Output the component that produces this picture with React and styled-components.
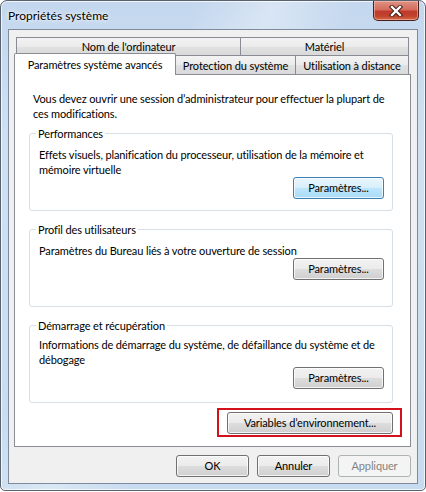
import React from 'react';
import styled, { createGlobalStyle, css } from 'styled-components';

const Global = createGlobalStyle`
  html, body { margin: 0; padding: 0; background: #ffffff; }
  body {
    width: 426px; height: 492px; overflow: hidden;
    font-family: "Segoe UI", Lato, "Noto Sans", sans-serif;
    font-size: 11px; letter-spacing: -0.12px; color: #000;
  }
  * { box-sizing: border-box; }
`;

const Window = styled.div`
  width: 426px;
  height: 491px;
  border: 1px solid #59636f;
  border-radius: 7px 7px 5px 5px;
  background:
    linear-gradient(115deg, rgba(255,255,255,0) 30%, rgba(255,255,255,0.35) 42%, rgba(255,255,255,0) 55%),
    linear-gradient(to bottom, #c3d7ee 0%, #cfe0f3 30%, #c7dbf0 100%);
  box-shadow: inset 0 0 0 1px rgba(255,255,255,0.75);
  display: flex;
  flex-direction: column;
  padding: 0 7px 6px 7px;
`;

const TitleBar = styled.div`
  height: 28px;
  display: flex;
  align-items: flex-start;
  justify-content: space-between;
`;

const Title = styled.div`
  padding-top: 7px;
  line-height: 15px;
  font-size: 12px;
  letter-spacing: 0;
  color: #000;
  text-shadow: 0 0 6px rgba(255,255,255,0.9), 0 0 3px rgba(255,255,255,0.9);
`;

const CloseButton = styled.div`
  width: 46px;
  height: 20px;
  margin-right: -1px;
  border: 1px solid #4a1f1c;
  border-top: none;
  border-radius: 0 0 5px 5px;
  background: linear-gradient(to bottom, #de9284 0%, #d46d5d 45%, #bf3a2b 55%, #c2432d 80%, #d46b4b 100%);
  box-shadow: inset 0 0 0 1px rgba(255,220,210,0.45);
  display: flex;
  align-items: center;
  justify-content: center;
`;

const Client = styled.div`
  flex: 1;
  border: 1px solid #7d8b9c;
  background: #f0f0f0;
  display: flex;
  flex-direction: column;
  padding: 7px 6px 6px 5px;
`;

const TabRow = styled.div`
  display: flex;
  align-items: flex-end;
  height: ${p => p.$h}px;
  padding: 0 2px 0 ${p => p.$inset}px;
`;

const Tab = styled.div`
  width: ${p => p.$w}px;
  height: ${p => p.$h}px;
  margin-left: ${p => (p.$first ? 0 : -1)}px;
  border: 1px solid #898c95;
  border-bottom: none;
  display: flex;
  align-items: center;
  justify-content: center;
  line-height: 15px;
  white-space: nowrap;
  ${p => p.$active
    ? css`
      position: relative;
      z-index: 2;
      background: #ffffff;
      margin-bottom: -1px;
      padding-bottom: 1px;
      border-radius: 2px 2px 0 0;
    `
    : css`
      background: linear-gradient(to bottom, #f3f3f3 0%, #ebebeb 50%, #e1e1e1 51%, #d9d9d9 100%);
    `}
`;

const Panel = styled.div`
  flex: 1;
  border: 1px solid #898c95;
  background: #ffffff;
  display: flex;
  flex-direction: column;
  padding: 16px 17px 0 14px;
`;

const Intro = styled.p`
  margin: 0 0 5px 4px;
  line-height: 15px;
  white-space: nowrap;
`;

const Group = styled.fieldset`
  margin: 0 0 ${p => p.$mb}px 0;
  height: 85px;
  border: 1px solid #d5dfe5;
  border-radius: 3px;
  padding: 0 8px 8px 9px;
  display: flex;
  flex-direction: column;
  min-width: 0;
`;

const Legend = styled.legend`
  padding: 0 2px;
  margin-left: -3px;
  line-height: 15px;
`;

const GroupText = styled.div`
  line-height: 15px;
  padding-top: ${p => p.$pt}px;
  white-space: nowrap;
`;

const RightRow = styled.div`
  display: flex;
  justify-content: flex-end;
  margin-top: ${p => p.$auto ? 'auto' : `${p.$mt}px`};
`;

const Highlight = styled.div`
  position: relative;
  &::after {
    content: "";
    position: absolute;
    left: -10px;
    right: -9px;
    top: -4px;
    bottom: -3px;
    border: 2px solid #d2111c;
    pointer-events: none;
  }
`;

const Button = styled.div`
  width: ${p => p.$w}px;
  height: ${p => p.$h || 22}px;
  border-radius: 3px;
  display: flex;
  align-items: center;
  justify-content: center;
  line-height: 15px;
  white-space: nowrap;
  padding-bottom: 1px;
  ${p => p.$variant === 'focus' && css`
    border: 1px solid #3c7fb1;
    background: linear-gradient(to bottom, #e9f6fd 0%, #d6effc 50%, #bde6fd 51%, #a9dbf6 100%);
    box-shadow: inset 0 0 0 1px rgba(255,255,255,0.75);
  `}
  ${p => p.$variant === 'normal' && css`
    border: 1px solid #707070;
    background: linear-gradient(to bottom, #f2f2f2 0%, #ebebeb 50%, #dddddd 51%, #cfcfcf 100%);
    box-shadow: inset 0 0 0 1px rgba(255,255,255,0.75);
  `}
  ${p => p.$variant === 'disabled' && css`
    border: 1px solid #adb2b5;
    background: #f4f4f4;
    color: #838383;
  `}
`;

const ButtonBar = styled.div`
  display: flex;
  justify-content: flex-end;
  gap: 8px;
  margin-top: 8px;
`;

const CloseGlyph = () => (
  <svg width="14" height="12" viewBox="0 0 14 12">
    <path d="M3 2 L11 10 M11 2 L3 10" stroke="#3a1512" strokeWidth="4.2" strokeLinecap="square" />
    <path d="M3 2 L11 10 M11 2 L3 10" stroke="#ffffff" strokeWidth="2.4" strokeLinecap="square" />
  </svg>
);

export default function App() {
  return (
    <>
      <Global />
      <Window>
        <TitleBar>
          <Title>Propriétés système</Title>
          <CloseButton><CloseGlyph /></CloseButton>
        </TitleBar>
        <Client>
          <TabRow $h={18} $inset={2}>
            <Tab $first $w={225} $h={18}>Nom de l'ordinateur</Tab>
            <Tab $w={169} $h={18}>Matériel</Tab>
          </TabRow>
          <TabRow $h={19} $inset={0}>
            <Tab $first $active $w={162} $h={22}>Paramètres système avancés</Tab>
            <Tab $w={121} $h={19}>Protection du système</Tab>
            <Tab $w={114} $h={19}>Utilisation à distance</Tab>
          </TabRow>
          <Panel>
            <Intro>
              Vous devez ouvrir une session d’administrateur pour effectuer la plupart de
              <br />
              ces modifications.
            </Intro>
            <Group $mb={11}>
              <Legend>Performances</Legend>
              <GroupText $pt={6}>
                Effets visuels, planification du processeur, utilisation de la mémoire et
                <br />
                mémoire virtuelle
              </GroupText>
              <RightRow $auto>
                <Button $variant="focus" $w={91}>Paramètres...</Button>
              </RightRow>
            </Group>
            <Group $mb={11}>
              <Legend>Profil des utilisateurs</Legend>
              <GroupText $pt={6}>Paramètres du Bureau liés à votre ouverture de session</GroupText>
              <RightRow $auto>
                <Button $variant="normal" $w={91}>Paramètres...</Button>
              </RightRow>
            </Group>
            <Group $mb={0}>
              <Legend>Démarrage et récupération</Legend>
              <GroupText $pt={4}>
                Informations de démarrage du système, de défaillance du système et de
                <br />
                débogage
              </GroupText>
              <RightRow $auto>
                <Button $variant="normal" $w={91}>Paramètres...</Button>
              </RightRow>
            </Group>
            <RightRow $mt={9}>
              <Highlight>
                <Button $variant="normal" $w={166}>Variables d’environnement...</Button>
              </Highlight>
            </RightRow>
          </Panel>
          <ButtonBar>
            <Button $variant="normal" $w={73}>OK</Button>
            <Button $variant="normal" $w={73}>Annuler</Button>
            <Button $variant="disabled" $w={73}>Appliquer</Button>
          </ButtonBar>
        </Client>
      </Window>
    </>
  );
}
